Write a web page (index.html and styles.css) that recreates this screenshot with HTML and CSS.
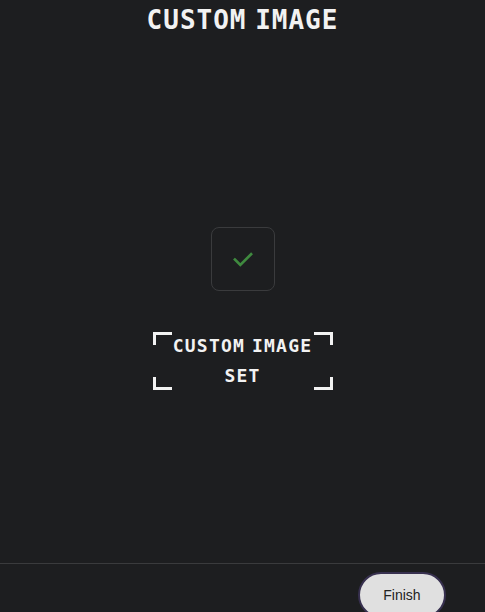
FILE: index.html
```html
<!DOCTYPE html>
<html>
<head>
<meta charset="utf-8">
<link rel="stylesheet" href="styles.css">
</head>
<body>
<div class="page">
  <header class="header"><h1 class="title">CUSTOM IMAGE</h1></header>
  <main class="main">
    <div class="check">
      <svg width="26" height="26" viewBox="0 0 24 24" fill="none" stroke="#3f8a3f" stroke-width="2.4" stroke-linecap="square"><path d="M4.5 12.5l5 5 10-10"/></svg>
    </div>
    <div class="frame">
      <span class="corner tl"></span><span class="corner tr"></span>
      <span class="corner bl"></span><span class="corner br"></span>
      <p class="label">CUSTOM IMAGE<br>SET</p>
    </div>
  </main>
  <footer class="footer"><button class="finish">Finish</button></footer>
</div>
</body>
</html>
```
FILE: styles.css
```css
html, body { margin: 0; padding: 0; background: #1d1e20; }
.page { height: 612px; display: flex; flex-direction: column; overflow: hidden; }
.header { height: 40px; display: flex; justify-content: center; align-items: center; }
.title { margin: 0; font-family: "DejaVu Sans Mono", monospace; font-weight: bold; font-size: 26px; color: #f2f2f2; letter-spacing: 1px; word-spacing: -8px; line-height: 40px; padding-bottom: 1px; }
.main { flex: 1; display: flex; flex-direction: column; align-items: center; justify-content: center; padding-top: 14px; }
.check { width: 62px; height: 62px; border: 1px solid #3a3b3d; border-radius: 8px; display: flex; align-items: center; justify-content: center; box-sizing: content-box; }
.frame { position: relative; margin-top: 41px; width: 180px; height: 58px; display: flex; align-items: center; justify-content: center; }
.label { margin: 0; font-family: "DejaVu Sans Mono", monospace; font-weight: bold; font-size: 18px; line-height: 30px; color: #f2f2f2; text-align: center; letter-spacing: 1.2px; word-spacing: -5px; }
.corner { position: absolute; width: 16px; height: 10px; border-color: #f2f2f2; border-style: solid; border-width: 0; }
.tl { top: 0; left: 0; border-top-width: 3px; border-left-width: 3px; }
.tr { top: 0; right: 0; border-top-width: 3px; border-right-width: 3px; }
.bl { bottom: 0; left: 0; border-bottom-width: 3px; border-left-width: 3px; }
.br { bottom: 0; right: 0; border-bottom-width: 3px; border-right-width: 3px; }
.footer { border-top: 1px solid #3a3b3d; height: 40px; flex: none; display: flex; justify-content: flex-end; align-items: flex-start; padding: 8px 39px 0 0; }
.finish { flex: none; width: 88px; height: 46px; border-radius: 23px; background: #e0e0e0; border: 2px solid #37304f; font-family: "Liberation Sans", Arial, sans-serif; font-size: 14px; color: #222; padding: 0; }
```
